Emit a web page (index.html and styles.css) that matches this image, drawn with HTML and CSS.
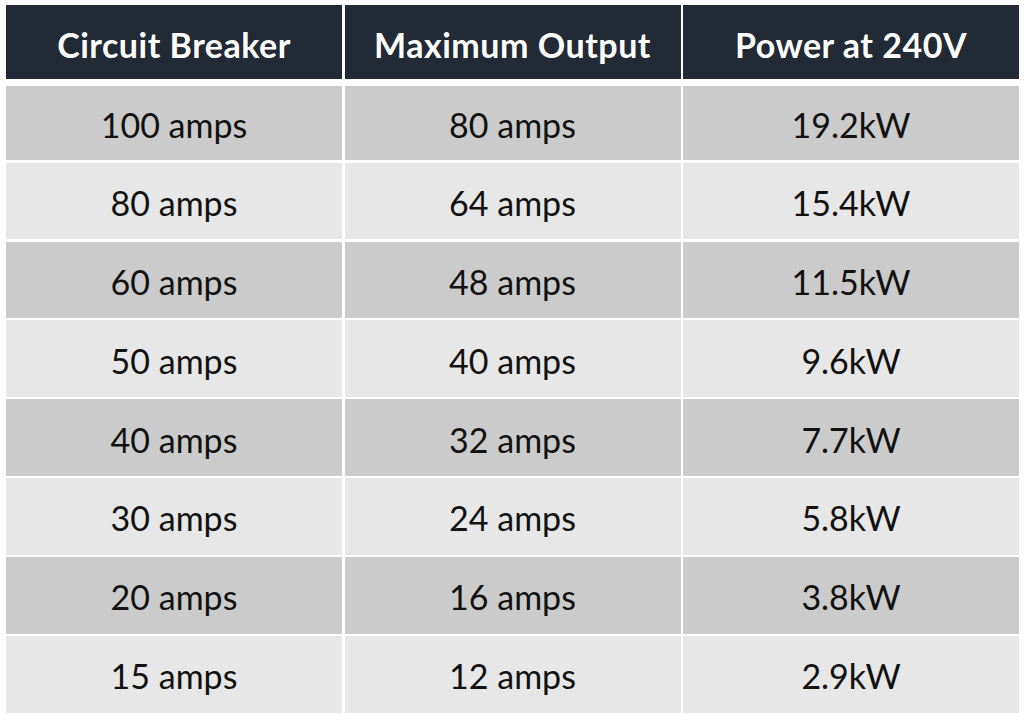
FILE: index.html
```html
<!DOCTYPE html>
<html>
<head>
<meta charset="utf-8">
<link rel="stylesheet" href="styles.css">
</head>
<body>
<div class="table">
  <div class="cell head">Circuit Breaker</div>
  <div class="cell head">Maximum Output</div>
  <div class="cell head">Power at 240V</div>

  <div class="cell dark">100 amps</div>
  <div class="cell dark">80 amps</div>
  <div class="cell dark">19.2kW</div>

  <div class="cell light">80 amps</div>
  <div class="cell light">64 amps</div>
  <div class="cell light">15.4kW</div>

  <div class="cell dark">60 amps</div>
  <div class="cell dark">48 amps</div>
  <div class="cell dark">11.5kW</div>

  <div class="cell light">50 amps</div>
  <div class="cell light">40 amps</div>
  <div class="cell light">9.6kW</div>

  <div class="cell dark">40 amps</div>
  <div class="cell dark">32 amps</div>
  <div class="cell dark">7.7kW</div>

  <div class="cell light">30 amps</div>
  <div class="cell light">24 amps</div>
  <div class="cell light">5.8kW</div>

  <div class="cell dark">20 amps</div>
  <div class="cell dark">16 amps</div>
  <div class="cell dark">3.8kW</div>

  <div class="cell light">15 amps</div>
  <div class="cell light">12 amps</div>
  <div class="cell light">2.9kW</div>
</div>
</body>
</html>
```
FILE: styles.css
```css
html, body {
  margin: 0;
  padding: 0;
  background: #ffffff;
}
body {
  padding: 5px 0 0 6px;
  font-family: Lato, "Open Sans", sans-serif;
}
.table {
  width: 1013px;
  display: grid;
  grid-template-columns: 1fr 1fr 1fr;
  grid-template-rows: 78.6px 74.3px repeat(7, 76.5px);
  column-gap: 2.5px;
  row-gap: 2.4px;
}
.cell {
  display: flex;
  align-items: center;
  justify-content: center;
  font-size: 34px;
  color: #111111;
  padding-top: 3px;
  box-sizing: border-box;
}
.head {
  background: #222a35;
  color: #ffffff;
  font-weight: 700;
  font-size: 34px;
  letter-spacing: 0.5px;
  height: 74px;
  align-self: start;
  padding-top: 5px;
}
.dark {
  background: #cbcbcb;
}
.light {
  background: #e7e7e7;
}
```
